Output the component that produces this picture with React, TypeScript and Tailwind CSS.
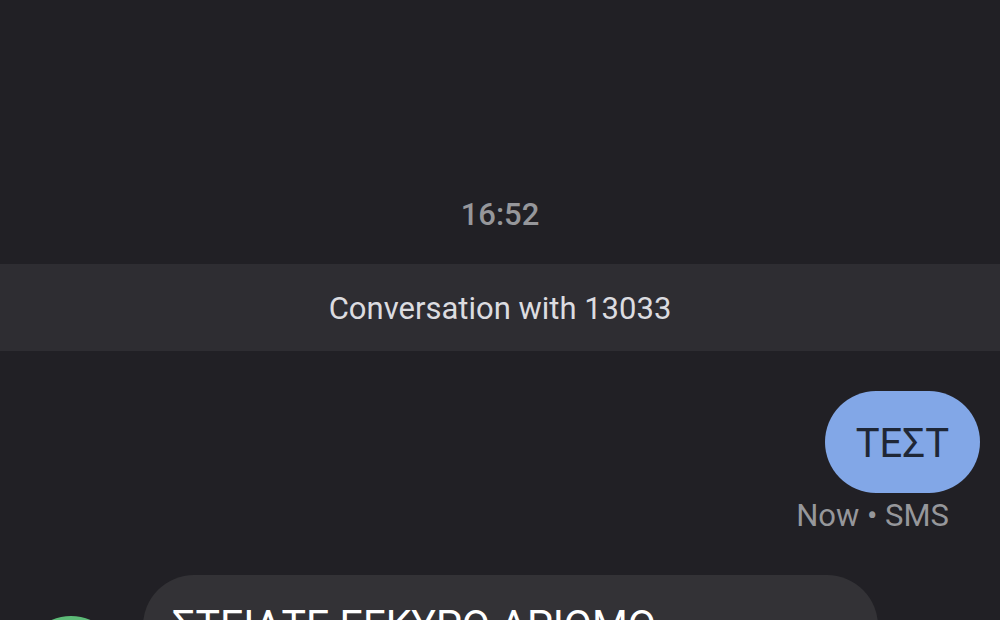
function DayHeader({ time, title }: { time: string; title: string }) {
  return (
    <header className="text-center">
      <time className="block pb-[31px] text-[31px] leading-9 font-medium text-[#96979b]">
        {time}
      </time>
      <h1 className="bg-[#2e2d32] pt-[25px] pb-[22px] text-[31px] leading-10 text-[#dcdce0]">
        {title}
      </h1>
    </header>
  );
}

function SentMessage({ text, status }: { text: string; status: string }) {
  return (
    <li className="flex flex-col items-end pr-5">
      <p className="rounded-[51px] bg-[#82a7e7] px-[31px] pt-[29px] pb-[25px] text-[40px] leading-[48px] text-[#1f2736]">
        {text}
      </p>
      <p className="pt-[5px] pr-[31px] text-[31px] leading-9 text-[#96979b]">{status}</p>
    </li>
  );
}

function ReceivedMessage({ lines }: { lines: string[] }) {
  return (
    <li className="flex items-end gap-[21px] pl-5">
      <span className="size-[102px] shrink-0 rounded-full bg-[#5dbb78]" />
      <p className="w-3/4 rounded-[51px] bg-[#333236] px-[29px] pt-[26px] pb-[21px] text-[41px] leading-[48px] text-white">
        {lines.map((line) => (
          <span key={line} className="block whitespace-nowrap">
            {line}
          </span>
        ))}
      </p>
    </li>
  );
}

export default function App() {
  return (
    <main className="h-screen overflow-hidden bg-[#212025] pt-[197px] font-['Roboto',sans-serif]">
      <DayHeader time="16:52" title="Conversation with 13033" />
      <ul className="flex flex-col gap-[41px] pt-10">
        <SentMessage text="ΤΕΣΤ" status="Now • SMS" />
        <ReceivedMessage lines={["ΣΤΕΙΛΤΕ ΕΓΚΥΡΟ ΑΡΙΘΜΟ", "ΜΕΤΑΚΙΝΗΣΗΣ"]} />
      </ul>
    </main>
  );
}
